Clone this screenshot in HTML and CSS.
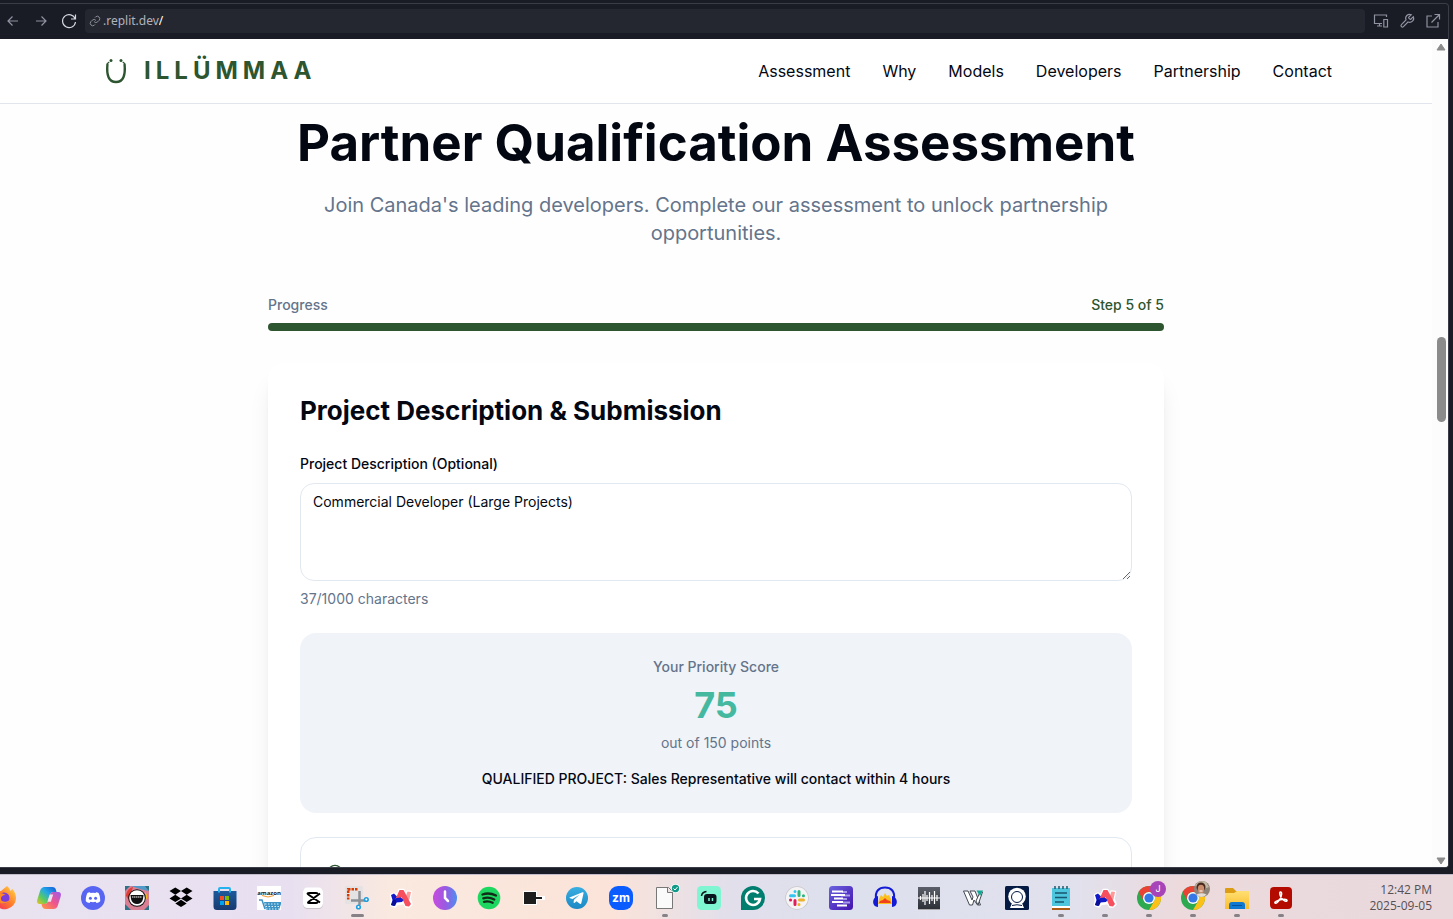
FILE: index.html
```html
<!DOCTYPE html>
<html lang="en">
<head>
<meta charset="utf-8">
<meta name="viewport" content="width=device-width, initial-scale=1">
<title>ILLÜMMAA – Partner Qualification Assessment</title>
<link rel="stylesheet" href="styles.css">
</head>
<body>
<div class="window">
  <div class="toolbar">
    <div class="tools nav-tools">
      <button class="tool" aria-label="Back"><svg viewBox="0 0 16 16"><path d="M13 8H3M7.500 3.500 3 8l4.500 4.500"/></svg></button>
      <button class="tool" aria-label="Forward"><svg viewBox="0 0 16 16"><path d="M3 8h10M8.500 3.500 13 8l-4.500 4.500"/></svg></button>
      <button class="tool bright" aria-label="Reload"><svg viewBox="0 0 16 16"><path d="M14.500 1.500v4.500h-4.500M14.200 6A6.500 6.500 0 1 0 14.500 9"/></svg></button>
    </div>
    <div class="address">
      <svg class="link-icon" viewBox="0 0 24 24"><path d="M10 13a5 5 0 0 0 7.500.5l3-3a5 5 0 0 0-7-7L12 5M14 11a5 5 0 0 0-7.500-.5l-3 3a5 5 0 0 0 7 7L12 19"/></svg>
      <label for="path">.replit.dev</label><input id="path" type="text" value="/">
    </div>
    <div class="tools page-tools">
      <button class="tool" aria-label="Devices"><svg viewBox="0 0 16 16"><path d="M9 10.500H1.500v-8.500h12v2M4 13h5M6.500 10.500V13M10.800 6.500h3.700v7.500h-3.700z"/></svg></button>
      <button class="tool" aria-label="Developer tools"><svg viewBox="0 0 24 24"><path class="wide" d="M14.700 6.300a1 1 0 0 0 0 1.400l1.600 1.600a1 1 0 0 0 1.400 0l3.770-3.770a6 6 0 0 1-7.940 7.940l-6.910 6.910a2.120 2.120 0 0 1-3-3l6.910-6.910a6 6 0 0 1 7.940-7.940z"/></svg></button>
      <button class="tool" aria-label="Open in new tab"><svg viewBox="0 0 16 16"><path d="M7 3H2v11h11V9M9.500 1.500h5v5M14.500 1.500 6.500 9.500"/></svg></button>
    </div>
  </div>
  <div class="viewport">
    <div class="page">
      <header class="site-header">
        <div class="header-inner">
          <a class="brand" href="#">
            <svg viewBox="0 0 24 28"><path d="M3.400 7.500C2.500 18 4.500 25 12 25s9.500-7 8.600-17.500"/><path class="tip" d="m3.400 6.500 1.500-1.200M20.600 6.500l-1.500-1.200"/><circle cx="7" cy="3.500" r="1.500"/><circle cx="17" cy="3.500" r="1.500"/></svg>
            <span>ILLÜMMAA</span>
          </a>
          <nav class="site-nav">
            <a href="#">Assessment</a><a href="#">Why</a><a href="#">Models</a><a href="#">Developers</a><a href="#">Partnership</a><a href="#">Contact</a>
          </nav>
        </div>
      </header>
      <main class="assessment">
        <h1>Partner Qualification Assessment</h1>
        <p class="lead">Join Canada's leading developers. Complete our assessment to unlock partnership opportunities.</p>
        <div class="progress-head"><span>Progress</span><span class="step">Step 5 of 5</span></div>
        <div class="progress-bar" role="progressbar" aria-label="Progress" aria-valuenow="5" aria-valuemax="5"></div>
        <form class="card">
          <h2>Project Description &amp; Submission</h2>
          <label class="field-label" for="description">Project Description (Optional)</label>
          <textarea id="description" spellcheck="false">Commercial Developer (Large Projects)</textarea>
          <p class="count">37/1000 characters</p>
          <section class="score">
            <p class="score-title">Your Priority Score</p>
            <p class="score-value">75</p>
            <p class="score-total">out of 150 points</p>
            <p class="score-note">QUALIFIED PROJECT: Sales Representative will contact within 4 hours</p>
          </section>
          <section class="consent">
            <svg viewBox="0 0 24 24"><circle cx="12" cy="12" r="10"/></svg>
          </section>
        </form>
      </main>
    </div>
    <div class="scrollbar">
      <svg viewBox="0 0 10 8"><path d="M5 1 9 7H1z"/></svg>
      <div class="track"><div class="thumb"></div></div>
      <svg viewBox="0 0 10 8"><path d="M5 7 9 1H1z"/></svg>
    </div>
  </div>
</div>
<footer class="taskbar">
  <svg class="defs" aria-hidden="true">
    <defs>
      <linearGradient id="fox" x1="1" y1="0" x2="0" y2="1"><stop offset="0" stop-color="#ffe14a"/><stop offset=".5" stop-color="#ff7a2a"/><stop offset="1" stop-color="#f0216b"/></linearGradient>
      <linearGradient id="cpA" x1="1" y1="0" x2="0" y2="1"><stop offset="0" stop-color="#1457d8"/><stop offset=".4" stop-color="#22a7e8"/><stop offset=".7" stop-color="#5ccb5f"/><stop offset="1" stop-color="#f2c21b"/></linearGradient>
      <linearGradient id="cpB" x1="1" y1="0" x2="0" y2="1"><stop offset="0" stop-color="#9c5af0"/><stop offset=".5" stop-color="#f0558a"/><stop offset="1" stop-color="#ff9a3d"/></linearGradient>
      <linearGradient id="store" x1="0" y1="0" x2="0" y2="1"><stop offset="0" stop-color="#1c5a9c"/><stop offset="1" stop-color="#183b70"/></linearGradient>
      <linearGradient id="clock"><stop offset="0" stop-color="#c94be0"/><stop offset=".5" stop-color="#9b59e0"/><stop offset="1" stop-color="#4d8df2"/></linearGradient>
      <linearGradient id="tele" x1="0" y1="0" x2="0" y2="1"><stop offset="0" stop-color="#37aee2"/><stop offset="1" stop-color="#1c88c4"/></linearGradient>
      <linearGradient id="violet" x1="0" y1="0" x2="1" y2="1"><stop offset="0" stop-color="#6a63e0"/><stop offset="1" stop-color="#4312ad"/></linearGradient>
      <linearGradient id="folder" x1="0" y1="0" x2="0" y2="1"><stop offset="0" stop-color="#ffdf72"/><stop offset="1" stop-color="#fbbd2c"/></linearGradient>
      <linearGradient id="wave" x1="0" y1="0" x2="0" y2="1"><stop offset="0" stop-color="#5a5f69"/><stop offset="1" stop-color="#2d3037"/></linearGradient>
      <g id="arc">
        <path fill="#fff" stroke="#fff" stroke-width="2.500" stroke-linejoin="round" d="m2 9 3-1.500 3 2L10.500 4h4l2.500 5 1.500-3.500L22 6l-1.500 7 2 5-2.500 2.500h-3L15 17l-7 1-2 2.500-4-1.500L3 14z"/>
        <path fill="#101ac8" d="m2 9 3-1.500 3 3-2 7.500-1 2-3-1 1.500-5z"/>
        <path fill="#0a0f96" d="m4.500 13.500 4 1-2.500 5.500-4-1z"/>
        <path fill="#ff9a98" d="m18.500 5.500 3.500.5-1.500 7-2 2-1.500-5.500z"/>
        <path fill="#f6505f" d="m10.500 4h4l7.500 14-2 2.500-3.500-.5-4-9-2.500 3-3.500-1z"/>
        <path fill="#101ac8" d="m7 12 5-.5 2.500 2.500-1.500 2-6 .5z"/>
      </g>
      <g id="chrome">
        <circle cx="12" cy="12" r="12" fill="#2da94f"/>
        <path fill="#ea4335" d="M1.600 6A12 12 0 0 1 22.400 6H12a6 6 0 0 0-5.200 9z"/>
        <path fill="#fbc116" d="M22.400 6A12 12 0 0 1 12 24l5.200-9A6 6 0 0 0 12 6z"/>
        <circle cx="12" cy="12" r="6" fill="#fff"/><circle cx="12" cy="12" r="4.600" fill="#3478e8"/>
      </g>
    </defs>
  </svg>
  <div class="apps">
    <button class="app" aria-label="Firefox"><svg viewBox="0 0 24 24"><path fill="url(#fox)" d="M14 0c2 2 3 3 3.500 5l2-2C22 6 23 9 23 12A11.500 11.500 0 1 1 1 7l3-4 1 3 3-1z"/><circle cx="11" cy="12" r="5.500" fill="#7a3ddb"/><path fill="#ff8a25" d="M2 9c4-3 7-2 11 0-3 0-5 1-5 4 0 3 5 4 9 1-2 5-13 6-15-5z"/></svg></button>
    <button class="app" aria-label="Copilot"><svg viewBox="0 0 24 24"><path fill="url(#cpA)" d="M7.500 1H15c2.500 0 3.500 1 4 3l.5 2H17c-2.500 0-3.500 1-4.300 3.500L11 15c-.8 2.500-2 3-4 3H3.500C0 18-.5 16 .5 13L3 5c1-3 2.500-4 4.500-4z"/><path fill="url(#cpB)" d="M16.500 23H9c-2.500 0-3.500-1-4-3l-.5-2H7c2.500 0 3.500-1 4.300-3.500L13 9c.8-2.500 2-3 4-3h3.500C24 6 24.500 8 23.500 11L21 19c-1 3-2.500 4-4.500 4z"/><path fill="#ece3f2" d="M12.700 8.500h3.500l-2.300 7.300h-3.500z"/></svg></button>
    <button class="app" aria-label="Discord"><svg viewBox="0 0 24 24"><circle cx="12" cy="12" r="12" fill="#5865f2"/><path fill="#fff" d="m9.500 7-.6-.7C7 6.700 6.300 7.200 6.300 7.200 5 10 4.700 12.500 4.800 15.300c1 1 2.300 1.600 3.700 1.800l.9-1.400a8 8 0 0 0 5.200 0l.9 1.400c1.400-.2 2.700-.8 3.700-1.800.1-2.800-.2-5.300-1.500-8.100 0 0-.7-.5-2.600-.9l-.6.7a9 9 0 0 0-5 0z"/><circle cx="9.400" cy="12.200" r="1.500" fill="#5865f2"/><circle cx="14.600" cy="12.200" r="1.500" fill="#5865f2"/></svg></button>
    <button class="app" aria-label="Mask"><svg viewBox="0 0 24 24"><path fill="#d97f93" d="M0 0h24v24H0z"/><path fill="#2c7388" d="M0 0h5L0 5zM24 0v5l-5-5zM0 24v-6l6 6zM24 24v-5l-5 5z"/><path fill="#4f9ac8" d="M6 0h14l3 5-8-2z"/><path fill="#e33b35" d="M1 10c0-4 3-8 7-9L4 14z"/><path fill="#f1b722" d="M20 6c3 3 3 6 0 9z"/><circle cx="12" cy="12" r="8.800" fill="#111"/><circle cx="12" cy="12" r="7.800" fill="#fff"/><path fill="#111" d="M5.500 9h13l-.5 4c-.8 3.500-3 5-6 5s-5.200-1.500-6-5z"/><path stroke="#fff" stroke-dasharray="1.500 .5" d="M7 11h10"/></svg></button>
    <button class="app" aria-label="Dropbox"><svg viewBox="0 0 24 24"><path d="m6.300 1.500 5.700 3.600-5.700 3.700L.5 5.100zM17.700 1.500l5.800 3.600-5.800 3.700L12 5.100zM6.300 8.800l5.700 3.700-5.700 3.600-5.800-3.600zM17.700 8.800l5.800 3.700-5.800 3.600-5.700-3.600zM12 13.800l5.700 3.700-5.700 3.600-5.700-3.600z"/></svg></button>
    <button class="app" aria-label="Microsoft Store"><svg viewBox="0 0 24 24"><path fill="none" stroke="#24b3ef" stroke-width="2" d="M6 7V3q0-1 1-1h9q1 0 1 1v4"/><path fill="url(#store)" d="M.5 5h23v15.500a3.500 3.500 0 0 1-3.500 3.500H4a3.500 3.500 0 0 1-3.500-3.500z"/><path stroke="#24b3ef" stroke-width="2" d="M6 3v3.500M17 3v3.500"/><path fill="#f25022" d="M7 10h4v4H7z"/><path fill="#7fba00" d="M12 10h4v4h-4z"/><path fill="#00a4ef" d="M7 15h4v4H7z"/><path fill="#ffb900" d="M12 15h4v4h-4z"/></svg></button>
    <button class="app" aria-label="Amazon"><svg viewBox="0 0 24 24"><path fill="#fff" d="M0 0h24v24H0z"/><text x="12" y="8.500" class="t-amazon">amazon</text><path fill="none" stroke="#f79a2c" d="M5 9.500q6 3 12 0"/><path fill="#3d93c4" d="M7 16h17v2l-2 6H9z"/><path fill="none" stroke="#3d93c4" stroke-width="1.500" d="M2 14h3l3 9"/><path stroke="#d9f0fb" stroke-dasharray="1.500 1.500" d="M8 18h15M8.500 20.500H23M9 23h13"/></svg></button>
    <button class="app" aria-label="CapCut"><svg viewBox="0 0 24 24"><rect x="2" y="2" width="20" height="21" rx="4.500" fill="#c9c4c8"/><rect x="2" y="1.500" width="20" height="20.500" rx="4.500" fill="#fff"/><path fill="none" stroke="#000" stroke-width="2" stroke-linejoin="round" d="M19 7.500 8 15.500q-2 1.500 0 1.500h7q2 0 1-1.500M19 16.500 8 9Q5 7 8 7h7q2 0 1 1.500"/></svg></button>
    <button class="app active" aria-label="Snipping Tool"><svg viewBox="0 0 24 24"><rect width="18" height="18" rx="1.500" fill="#e4e2e2"/><path fill="none" stroke="#d83b01" stroke-width="2.500" stroke-dasharray="2.500 1" d="M12.500 3.200H3.200v10.300"/><path stroke="#8b9096" stroke-width="2.500" d="M14.500 5v14M6 14.500h14"/><circle cx="13.500" cy="21" r="2.600" fill="#1d9fe2"/><circle cx="21.300" cy="13.500" r="2.600" fill="#1d9fe2"/><circle cx="13.500" cy="21" r="1" fill="#fff"/><circle cx="21.300" cy="13.500" r="1" fill="#fff"/></svg></button>
    <button class="app" aria-label="Arc"><svg viewBox="0 0 24 24"><use href="#arc"/></svg></button>
    <button class="app" aria-label="Clockify"><svg viewBox="0 0 24 24"><circle cx="12" cy="12" r="12" fill="url(#clock)"/><path fill="none" stroke="#fff" stroke-width="2.500" stroke-linecap="round" d="M12 5.500V12l3 3"/></svg></button>
    <button class="app" aria-label="Spotify"><svg viewBox="0 0 24 24"><circle cx="12" cy="12" r="11.300" fill="#1ed760"/><path fill="none" stroke="#122b18" stroke-width="2.300" stroke-linecap="round" d="M5.500 8.500c4-1.500 9.500-1 13.500 1M6.300 12.300c3.500-1 7.700-.6 11 1.200M7 15.800c3-.8 6-.4 8.700 1"/></svg></button>
    <button class="app" aria-label="Recorder"><svg viewBox="0 0 24 24"><path fill="#fff" d="M2 5h14v5h8v4h-8v5H2z"/><path fill="#1d1d1d" d="M3 6h12v5h6v2h-6v5H3z"/></svg></button>
    <button class="app" aria-label="Telegram"><svg viewBox="0 0 24 24"><circle cx="12" cy="12" r="11" fill="url(#tele)"/><path fill="#fff" d="m4.500 11.500 13-5.200c.8-.2 1.200.2 1 1l-2.200 10c-.2.800-.8.900-1.400.5l-3.500-2.600-1.900 1.800-1-.5.500-2.800 5.500-5-7 4.300-3-.9z"/></svg></button>
    <button class="app" aria-label="Zoom"><svg viewBox="0 0 24 24"><rect width="24" height="24" rx="9" fill="#0b5cff"/><text x="12" y="16" class="t-zoom">zm</text></svg></button>
    <button class="app running" aria-label="Document"><svg viewBox="0 0 24 24"><path fill="#fafafa" stroke="#777" d="M3.500 1.500h12l4 4v17h-16zM14.500 1.500v5h5"/><circle cx="22.500" cy="2.500" r="4.500" fill="#fff"/><circle cx="22.500" cy="2.500" r="3.700" fill="#119a88"/><path fill="none" stroke="#fff" d="m20.500 2.500 1.500 1.500 2.500-3"/></svg></button>
    <button class="app" aria-label="Streamlabs"><svg viewBox="0 0 24 24"><rect width="24" height="24" rx="4.500" fill="#80f5d2"/><rect x="7" y="8" width="12.500" height="10" rx="3" fill="#09161d"/><path fill="none" stroke="#09161d" stroke-width="1.500" d="M4.500 10q.5-4 5-4.500"/><path stroke="#80f5d2" stroke-width="1.500" d="M12 12v3M15.500 12v3"/></svg></button>
    <button class="app" aria-label="Grammarly"><svg viewBox="0 0 24 24"><path fill="#027e6f" d="M0 24V12A12 12 0 1 1 12 24z"/><path fill="none" stroke="#fff" stroke-width="2.600" d="M17.500 7.500A7 7 0 1 0 19 13h-6"/></svg></button>
    <button class="app" aria-label="Slack"><svg viewBox="0 0 24 24"><circle cx="12" cy="12" r="11.800" fill="#c9c7cb"/><circle cx="12" cy="12" r="11" fill="#f5f4f5"/><g fill="none" stroke-width="3" stroke-linecap="round"><path stroke="#36c5f0" d="M5.500 9.800h4M10 5.500v.1"/><path stroke="#2eb67d" d="M14 5.500v4M18.500 9.800h-.1"/><path stroke="#ecb22e" d="M14.500 14h4M14 18.500v-.1"/><path stroke="#e01e5a" d="M10 14.500v4M5.500 14h.1"/></g></svg></button>
    <button class="app" aria-label="Notes"><svg viewBox="0 0 24 24"><rect width="24" height="24" rx="3.500" fill="url(#violet)"/><path stroke="#a99bed" stroke-width="2" d="M13 6h5M12 9.500h9M14 13h4M14 16.500h7"/><path stroke="#fff" stroke-width="2" d="M3 5.500h11M2 9h14M5 12.500h9M3 16h11M8 19.500h10"/></svg></button>
    <button class="app" aria-label="Audacity"><svg viewBox="0 0 24 24"><path fill="#fcc01e" d="m5 18 1-5 2-4 2 2 2-4 2 3 2-1 2 4 1 5z"/><path fill="#f1401e" d="m6 17 1-2 3-1 2-2 2 2 3 1 1 2z"/><path fill="none" stroke="#141bd6" stroke-width="2" d="M3 13C2 5 6 1.500 12 1.500S22 5 21 13"/><path fill="#141bd6" d="M5 10v11c-6.500 0-6.500-10 0-11zM19 10v11c6.500 0 6.500-10 0-11z"/></svg></button>
    <button class="app" aria-label="Waveform"><svg viewBox="0 0 24 24"><path fill="url(#wave)" d="M1 1h22v22H1z"/><path fill="#aaa" d="M1 23h22v1H1z"/><path stroke="#fff" stroke-width="1.200" d="M1 12h22M3.500 10v4M6 8v8M8 5v14M10 9v6M12.500 6v12M15 9v6M17.500 5v13M20 9v6"/></svg></button>
    <button class="app" aria-label="Writer"><svg viewBox="0 0 24 24"><path fill="#fff" stroke="#424950" stroke-linejoin="round" d="M2.500 5H7l4 9 1-3-3-6h5l5.500 14h-3L13 14l-1.500 5h-3z"/><path fill="#fff" stroke="#424950" d="m15 15 4-9h2.500L17 19z"/><path fill="#10a890" d="M15.500 4.500H22L19 10z"/></svg></button>
    <button class="app" aria-label="Webcam"><svg viewBox="0 0 24 24"><rect width="24" height="24" rx="1.500" fill="#051a43"/><path fill="#fff" d="m7 17-2 5h14l-2-5z"/><circle cx="12" cy="10.500" r="8.800" fill="#fff"/><circle cx="12" cy="11" r="5.500" fill="none" stroke="#051a43"/><path fill="none" stroke="#051a43" d="M7 19.500q5-1.500 10 0"/></svg></button>
    <button class="app running" aria-label="Notepad"><svg viewBox="0 0 24 24"><path fill="#ad5a12" d="M3 21h18v3H3z"/><path fill="#fff" d="M3 19h18v3H3z"/><path fill="#4dc5dc" d="M3 2h18v18H3z"/><path stroke="#17566e" stroke-width="1.400" d="M6 7h12M6 11.500h12M6 16h9"/><path stroke="#225a6c" stroke-width="1.500" d="M6 0v3M10 0v3M14 0v3M18 0v3"/></svg></button>
    <button class="app running" aria-label="Arc window"><svg viewBox="0 0 24 24"><use href="#arc"/></svg></button>
    <button class="app running" aria-label="Chrome, profile J"><svg viewBox="0 0 24 24"><use href="#chrome"/><circle cx="21" cy="3" r="8" fill="#a745b8"/><text x="21" y="6" class="t-badge">J</text></svg></button>
    <button class="app running" aria-label="Chrome, second profile"><svg viewBox="0 0 24 24"><use href="#chrome"/><circle cx="21" cy="3" r="8" fill="#8d8378"/><path fill="#c5b8a5" d="M14 0c2-4 7-6 11-4l3 5-5 2z"/><circle cx="20" cy="1" r="4.500" fill="#46291d"/><ellipse cx="20" cy="3" rx="3.200" ry="4.200" fill="#c98c6d"/><path fill="#e5ddd5" d="M15.500 8.500q5-2.500 10 0-5 5-10 0z"/><path stroke="#fff" d="M18.500 5h3"/></svg></button>
    <button class="app running" aria-label="File Explorer"><svg viewBox="0 0 24 24"><path fill="#dc9c13" d="M0 3q0-1 1-1h7l3 3h12v5H0z"/><path fill="url(#folder)" d="M0 7h9l3-2h12v18H0z"/><path fill="#0f78d0" d="M4 23v-4q0-3 3-3h10q3 0 3 3v4z"/><path stroke="#07519b" d="M7 19.500h10"/></svg></button>
    <button class="app running" aria-label="Acrobat"><svg viewBox="0 0 24 24"><rect x="1" y="1" width="22" height="22" rx="4" fill="#b30b00"/><path fill="none" stroke="#fff" stroke-width="1.500" d="M11.500 6c2 0 1 4-.5 7-1.500 3-4 5-5 4s3-3 7-3.500c3-.5 5.500 0 5 1.300s-3 .2-5-2c-2-2.300-3-6.800-1.500-6.800z"/></svg></button>
  </div>
  <div class="clock"><time datetime="12:42">12:42 PM</time><time datetime="2025-09-05">2025-09-05</time></div>
</footer>
</body>
</html>
```
FILE: styles.css
```css
* { box-sizing: border-box; }
body, h1, h2, p { margin: 0; }
body {
  display: flex;
  flex-direction: column;
  height: 100vh;
  overflow: hidden;
  background: #191b25;
  color: #030712;
  font: 14px/20px Inter, "Liberation Sans", sans-serif;
}
button { padding: 0; border: 0; background: none; }
a { color: inherit; text-decoration: none; }
svg { display: block; overflow: visible; }

/* Browser panel */
.window {
  flex: 1;
  min-height: 0;
  display: flex;
  flex-direction: column;
  margin: 3px 4px 6px 0;
  border: 1px solid #3a3c48;
  border-left: 0;
  border-radius: 0 4px 4px 0;
  overflow: hidden;
}
.toolbar {
  flex: none;
  display: flex;
  align-items: center;
  gap: 8px;
  height: 35px;
  padding: 0 7px 1px 5px;
}
.tools { display: flex; }
.nav-tools { gap: 12px; }
.page-tools { gap: 10px; }
.tool svg {
  width: 16px;
  height: 16px;
  fill: none;
  stroke: #9093a0;
  stroke-width: 1.2;
}
.tool .wide { stroke-width: 1.8; }
.tool.bright svg { stroke: #d5d7de; }
.address {
  flex: 1;
  display: flex;
  align-items: center;
  height: 24px;
  padding-left: 4px;
  border-radius: 4px;
  background: #252730;
  color: #b0b3bd;
  font: 12px/20px "Noto Sans", sans-serif;
}
.link-icon { width: 12px; height: 12px; margin-right: 2px; fill: none; stroke: #8a8d99; stroke-width: 2; }
.address input {
  flex: 1;
  min-width: 0;
  padding: 0;
  border: 0;
  outline: 0;
  background: none;
  color: #fff;
  font: inherit;
}
.viewport { flex: 1; min-height: 0; display: flex; background: #fff; }
.page { flex: 1; min-width: 0; overflow: hidden; background: #fefefe; }
.scrollbar {
  flex: none;
  display: flex;
  flex-direction: column;
  align-items: center;
  justify-content: space-between;
  width: 16px;
  padding: 4px 1px 2px 3px;
  background: #fcfcfc;
}
.scrollbar svg { width: 10px; height: 8px; fill: #8b8b8b; stroke: #8b8b8b; stroke-linejoin: round; }
.track { flex: 1; padding-top: 286px; }
.thumb { width: 9px; height: 85px; border-radius: 5px; background: #8b8b8b; }

/* Site header */
.site-header { background: #fff; border-bottom: 1px solid #e2e4ee; }
.header-inner {
  display: flex;
  align-items: center;
  justify-content: space-between;
  max-width: 1280px;
  height: 64px;
  margin: 0 auto;
  padding: 0 24px 0 28px;
}
.brand {
  display: flex;
  align-items: center;
  gap: 16px;
  color: #2d5530;
  font-size: 24px;
  line-height: 32px;
  font-weight: 700;
  letter-spacing: 5px;
}
.brand svg { width: 24px; height: 28px; fill: #2d5530; }
.brand path { fill: none; stroke: #2d5530; stroke-width: 2.4; stroke-linecap: round; }
.brand .tip { stroke-width: 1.2; }
.site-nav { display: flex; gap: 32px; font-size: 16px; line-height: 24px; }

/* Assessment form */
.assessment { max-width: 896px; margin: 0 auto; padding-top: 15px; }
h1 { font-size: 51px; line-height: 48px; font-weight: 700; text-align: center; }
.lead {
  max-width: 800px;
  margin: 24px auto 48px;
  color: #64748b;
  font-size: 20px;
  line-height: 28px;
  text-align: center;
}
.progress-head { display: flex; justify-content: space-between; color: #64748b; font-weight: 500; }
.step { color: #2d5530; }
.progress-bar { height: 8px; margin: 8px 0 32px; border-radius: 4px; background: #2d5530; }
.card {
  padding: 32px;
  border-radius: 16px;
  background: #fff;
  box-shadow: 0 20px 25px -5px rgba(0, 0, 0, .1), 0 8px 10px -6px rgba(0, 0, 0, .1);
}
h2 { font-size: 26px; line-height: 32px; font-weight: 700; }
.field-label { display: block; margin: 27px 0 9px; font-weight: 500; }
textarea {
  display: block;
  width: 100%;
  height: 98px;
  padding: 8px 12px;
  border: 1px solid #e2e8f0;
  border-radius: 14px;
  outline: 0;
  background: #fff;
  color: inherit;
  font: inherit;
  resize: vertical;
}
.count { margin: 8px 0 24px; color: #64748b; }
.score {
  padding: 24px;
  border-radius: 16px;
  background: #f0f3f8;
  color: #64748b;
  text-align: center;
}
.score-title { font-weight: 500; }
.score-value { margin: 8px 0; color: #45b8a0; font-size: 36px; line-height: 40px; font-weight: 700; }
.score-note { margin-top: 16px; color: #030712; font-weight: 500; }
.consent { margin-top: 24px; padding: 26px; border: 1px solid #e2e8f0; border-radius: 16px; }
.consent svg { width: 16px; height: 16px; fill: none; stroke: #2d5530; stroke-width: 2; }

/* Taskbar */
.taskbar {
  flex: none;
  display: flex;
  justify-content: space-between;
  height: 45px;
  padding: 0 21px 0 0;
  overflow: hidden;
  border-top: 1px solid #c3bdc9;
  background: linear-gradient(90deg, #e9e2ef 0, #e8e0f1 20%, #fae9df 27%, #fbe3d9 42%, #e2dfeb 50%, #dde0ed 58%, #e1e1ed 74%, #ecdadd 81%, #e9d9dc 100%);
}
.defs { position: absolute; width: 0; height: 0; }
.apps { display: flex; gap: 20px; margin-left: -7px; }
.app {
  flex: none;
  display: flex;
  flex-direction: column;
  align-items: center;
  justify-content: flex-start;
  gap: 4px;
  width: 24px;
  padding-top: 11px;
}
.app svg { width: 24px; height: 24px; }
.running::after, .active::after { content: ""; width: 6px; height: 3px; border-radius: 2px; background: #858187; }
.active::after { width: 13px; }
.t-amazon { font: 700 6px "Open Sans", sans-serif; text-anchor: middle; fill: #222; }
.t-zoom { font: 700 12px Inter, sans-serif; text-anchor: middle; fill: #fff; }
.t-badge { font: 9px Inter, sans-serif; text-anchor: middle; fill: #fff; }
.clock {
  display: flex;
  flex-direction: column;
  padding-top: 7px;
  color: #555055;
  font: 12px/16px "Open Sans", sans-serif;
  text-align: right;
}
```
